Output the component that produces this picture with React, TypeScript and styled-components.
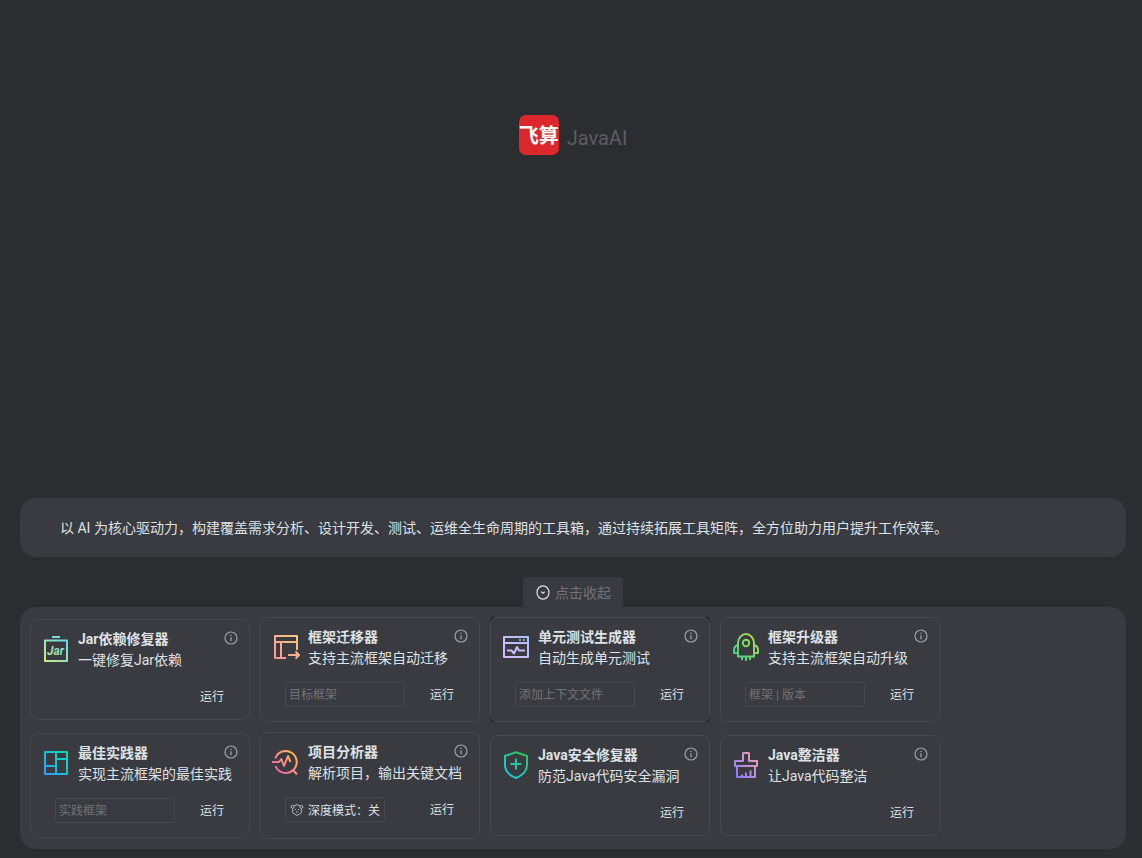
import React from "react";
import styled, { createGlobalStyle } from "styled-components";

const GlobalStyle = createGlobalStyle`
  *, *::before, *::after { box-sizing: border-box; }
  body {
    margin: 0;
    background: #2b2d30;
    color: #dfe1e5;
    font-family: Roboto, "Noto Sans CJK SC", sans-serif;
    font-size: 14px;
  }
  button, input { font: inherit; color: inherit; }
`;

const Page = styled.div`
  display: flex;
  flex-direction: column;
  min-height: 100vh;
  padding: 0 16px 9px 20px;
`;

const Hero = styled.header`
  flex: 1;
  display: flex;
  justify-content: center;
  align-items: flex-start;
  gap: 8px;
  padding: 115px 0 40px;
`;

const Logo = styled.div`
  display: flex;
  align-items: center;
  justify-content: center;
  width: 40px;
  height: 40px;
  border-radius: 7px;
  background: #dc282d;
  color: #ffffff;
  font-family: "Noto Sans CJK SC", sans-serif;
  font-size: 20px;
  font-weight: 700;
  line-height: 40px;
`;

const Brand = styled.h1`
  margin: 0;
  padding-top: 3px;
  color: #5a5d63;
  font-size: 20px;
  font-weight: 400;
  line-height: 40px;
`;

const Banner = styled.p`
  margin: 0 0 20px;
  padding: 19px 40px 18px;
  border-radius: 16px;
  background: #393b40;
  line-height: 22px;
`;

const Toggle = styled.button`
  align-self: center;
  display: flex;
  align-items: center;
  justify-content: center;
  gap: 4px;
  height: 30px;
  padding: 2px 12px 0;
  border: 0;
  border-radius: 4px;
  background: #393b40;
  color: #6f737a;
  line-height: 20px;
  cursor: pointer;
`;

const Panel = styled.ul`
  display: grid;
  grid-template-columns: repeat(auto-fill, 220px);
  align-items: center;
  gap: 10px;
  margin: 0;
  padding: 10px;
  border-radius: 16px;
  background: #393b40;
  list-style: none;
`;

const Slot = styled.li<{ $active?: boolean }>`
  background: ${(p) => (p.$active ? "#2b2d30" : "transparent")};
`;

type Variant = "plain" | "field" | "mode";
const endPadding: Record<Variant, number> = { plain: 10, field: 14, mode: 16 };

const Card = styled.article<{ $variant: Variant }>`
  padding: 9px 11px ${(p) => endPadding[p.$variant]}px;
  border: 1px solid #46484b;
  border-radius: 8px;
  background: #393b40;
`;

const CardHead = styled.div`
  display: flex;
  align-items: flex-start;
  gap: 8px;
`;

const ToolIcon = styled.svg`
  flex: none;
  width: 28px;
  height: 28px;
  margin-top: 6px;
  overflow: visible;
`;

const Titles = styled.div`
  flex: 1;
  white-space: nowrap;
`;

const TitleRow = styled.div`
  display: flex;
  justify-content: space-between;
  align-items: center;
  height: 21px;
`;

const Title = styled.h2`
  margin: 0;
  font-size: 14px;
  font-weight: 700;
  line-height: 21px;
`;

const Desc = styled.p`
  margin: 0;
  line-height: 21px;
`;

const InfoButton = styled.button`
  display: flex;
  padding: 0 0 4px;
  border: 0;
  background: none;
  color: #9da0a5;
  cursor: pointer;
`;

const Actions = styled.div`
  display: flex;
  align-items: center;
  height: 25px;
  margin-top: 13px;
  padding: 0 2px 0 13px;
  font-size: 12px;
`;

const Field = styled.input`
  width: 120px;
  height: 25px;
  padding: 0 3px;
  border: 1px solid #46484b;
  border-radius: 2px;
  background: transparent;
  outline: none;
  &::placeholder { color: #6f737a; opacity: 1; }
`;

const ModeButton = styled.button`
  display: flex;
  align-items: center;
  gap: 4px;
  width: 100px;
  height: 25px;
  padding: 0 4px;
  border: 1px solid #46484b;
  border-radius: 2px;
  background: transparent;
  white-space: nowrap;
  cursor: pointer;
`;

const RunButton = styled.button`
  width: 48px;
  height: 24px;
  margin-left: auto;
  padding: 0 0 2px;
  border: 0;
  background: none;
  cursor: pointer;
`;

const InfoIcon = () => (
  <svg width="14" height="14" viewBox="0 0 14 14" fill="none" aria-hidden="true">
    <circle cx="7" cy="7" r="6" stroke="currentColor" strokeWidth="1.2" />
    <path d="M7 6.2V10.2M7 3.8V5.1" stroke="currentColor" strokeWidth="1.3" />
  </svg>
);

const CollapseIcon = () => (
  <svg width="16" height="16" viewBox="0 0 16 16" fill="none" aria-hidden="true">
    <ellipse cx="8" cy="7.5" rx="6" ry="6.7" stroke="#dfe1e5" strokeWidth="1.2" />
    <path d="M6.3 6.8L8 8.3L9.7 6.8" stroke="#dfe1e5" strokeWidth="1.2" />
  </svg>
);

const ModeIcon = () => (
  <svg width="14" height="14" viewBox="0 0 14 14" fill="none" stroke="#b4b8bf" aria-hidden="true">
    <path d="M4 3L7 1.5L10 3M2.7 5.5V9.8L7 12.5L11.3 9.8V5.5" />
    <circle cx="2.6" cy="3.8" r="1.5" />
    <circle cx="11.4" cy="3.8" r="1.5" />
    <path d="M5 6.5H6M8 6.5H9M7 8V9.8" />
  </svg>
);

interface Tool {
  id: string;
  title: string;
  desc: string;
  colors: [string, string];
  art: (paint: string) => React.ReactNode;
  placeholder?: string;
  mode?: string;
  active?: boolean;
}

const tools: Tool[] = [
  {
    id: "jar",
    title: "Jar依赖修复器",
    desc: "一键修复Jar依赖",
    colors: ["#c8e88a", "#5fd8f2"],
    art: (paint) => (
      <>
        <path d="M10 2H18.01M3 5.5H25V26H3Z" />
        <text
          x="5"
          y="20"
          fill={paint}
          stroke="none"
          fontFamily="Roboto, sans-serif"
          fontSize="12"
          fontStyle="italic"
          fontWeight="700"
        >
          Jar
        </text>
      </>
    ),
  },
  {
    id: "migrate",
    title: "框架迁移器",
    desc: "支持主流框架自动迁移",
    colors: ["#ff9399", "#fec780"],
    placeholder: "目标框架",
    art: () => <path d="M14 25H3V3H25V17M3 9H25M9 9V25M16 22H27M23.5 18.5L27 22L23.5 25.5" />,
  },
  {
    id: "unit-test",
    title: "单元测试生成器",
    desc: "自动生成单元测试",
    colors: ["#dcb5ff", "#a9c6ff"],
    placeholder: "添加上下文文件",
    active: true,
    art: () => (
      <>
        <path d="M2 4H26V24H2ZM2 10H26M5 17.5H9.5L12 20.5L15 14L17 17.5H23" />
        <path d="M17 7H19M21 7H23" strokeWidth="1.5" />
      </>
    ),
  },
  {
    id: "upgrade",
    title: "框架升级器",
    desc: "支持主流框架自动升级",
    colors: ["#38d585", "#bcd94a"],
    placeholder: "框架 | 版本",
    art: () => (
      <>
        <path d="M6 23V10C6 5 10 1 14 1C18 1 22 5 22 10V23M5 23.5H23M6 12C3 13 2 15 2 17V20H5M22 12C25 13 26 15 26 17V20H23M10 24V27M14 24V28M18 24V27" />
        <circle cx="14" cy="10" r="3.2" />
      </>
    ),
  },
  {
    id: "practice",
    title: "最佳实践器",
    desc: "实现主流框架的最佳实践",
    colors: ["#329df5", "#05e0ae"],
    placeholder: "实践框架",
    art: () => <path d="M3 3H25V25H3ZM14 3V25M14 10H25M3 17H14" />,
  },
  {
    id: "analyze",
    title: "项目分析器",
    desc: "解析项目，输出关键文档",
    colors: ["#fb5bb5", "#ffc445"],
    mode: "深度模式：关",
    art: () => (
      <path d="M3.3 10.5A11 11 0 1 1 3.5 18M0 14H7L9.3 11L12 18L16 8L18.5 14M21 22L25 26.5" />
    ),
  },
  {
    id: "security",
    title: "Java安全修复器",
    desc: "防范Java代码安全漏洞",
    colors: ["#1fc8e8", "#2dc653"],
    art: () => (
      <path d="M14 1.2L25 5V14C25 20 20 24.5 14 27C8 24.5 3 20 3 14V5ZM14 7.5V18.5M8.5 13H19.5" />
    ),
  },
  {
    id: "clean",
    title: "Java整洁器",
    desc: "让Java代码整洁",
    colors: ["#8877ff", "#f8a5ab"],
    art: () => (
      <path d="M11 10V2.5C11 2.2 11.2 2 11.5 2H16.5C16.8 2 17 2.2 17 2.5V10H25V15H3V10ZM5 15V26H23V15M10 26V23.5M14 26V21.5M18.5 26V19.5" />
    ),
  },
];

const ToolCard = ({ tool }: { tool: Tool }) => {
  const variant: Variant = tool.placeholder ? "field" : tool.mode ? "mode" : "plain";
  const gradient = `paint-${tool.id}`;
  const paint = `url(#${gradient})`;
  return (
    <Card $variant={variant}>
      <CardHead>
        <ToolIcon
          viewBox="0 0 28 28"
          fill="none"
          stroke={paint}
          strokeWidth="2"
          strokeLinejoin="round"
          aria-hidden="true"
        >
          <defs>
            <linearGradient id={gradient} gradientUnits="userSpaceOnUse" x1="3" y1="25" x2="25" y2="3">
              <stop offset="0" stopColor={tool.colors[0]} />
              <stop offset="1" stopColor={tool.colors[1]} />
            </linearGradient>
          </defs>
          {tool.art(paint)}
        </ToolIcon>
        <Titles>
          <TitleRow>
            <Title>{tool.title}</Title>
            <InfoButton type="button" aria-label={`${tool.title}说明`}>
              <InfoIcon />
            </InfoButton>
          </TitleRow>
          <Desc>{tool.desc}</Desc>
        </Titles>
      </CardHead>
      <Actions>
        {tool.placeholder && (
          <Field type="text" placeholder={tool.placeholder} aria-label={tool.placeholder} />
        )}
        {tool.mode && (
          <ModeButton type="button">
            <ModeIcon />
            {tool.mode}
          </ModeButton>
        )}
        <RunButton type="button">运行</RunButton>
      </Actions>
    </Card>
  );
};

export default function App() {
  return (
    <>
      <GlobalStyle />
      <Page>
        <Hero>
          <Logo>飞算</Logo>
          <Brand>JavaAI</Brand>
        </Hero>
        <Banner>
          以 AI 为核心驱动力，构建覆盖需求分析、设计开发、测试、运维全生命周期的工具箱，通过持续拓展工具矩阵，全方位助力用户提升工作效率。
        </Banner>
        <Toggle type="button" aria-expanded="true">
          <CollapseIcon />
          点击收起
        </Toggle>
        <Panel>
          {tools.map((tool) => (
            <Slot key={tool.id} $active={tool.active}>
              <ToolCard tool={tool} />
            </Slot>
          ))}
        </Panel>
      </Page>
    </>
  );
}
